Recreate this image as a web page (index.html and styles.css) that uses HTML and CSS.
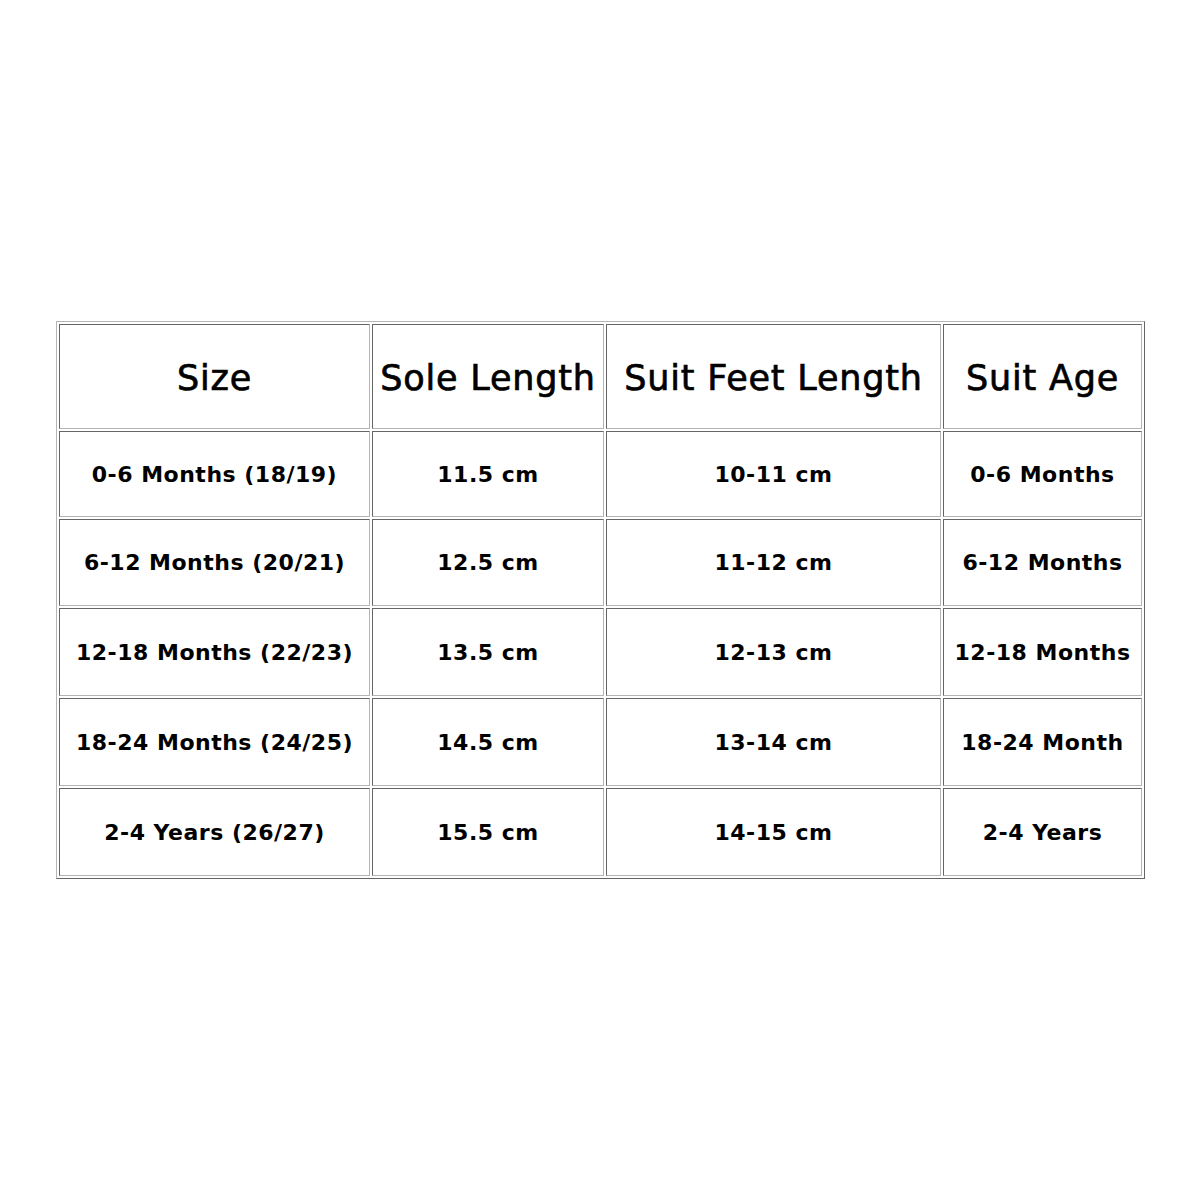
FILE: index.html
```html
<!DOCTYPE html>
<html>
<head>
<meta charset="utf-8">
<link rel="stylesheet" href="styles.css">
</head>
<body>
<div class="page">
<table class="size-chart">
  <thead>
    <tr class="head-row">
      <th class="c1">Size</th>
      <th class="c2">Sole Length</th>
      <th class="c3">Suit Feet Length</th>
      <th class="c4">Suit Age</th>
    </tr>
  </thead>
  <tbody>
    <tr class="r1"><td>0-6 Months (18/19)</td><td>11.5 cm</td><td>10-11 cm</td><td>0-6 Months</td></tr>
    <tr class="r2"><td>6-12 Months (20/21)</td><td>12.5 cm</td><td>11-12 cm</td><td>6-12 Months</td></tr>
    <tr class="r3"><td>12-18 Months (22/23)</td><td>13.5 cm</td><td>12-13 cm</td><td>12-18 Months</td></tr>
    <tr class="r4"><td>18-24 Months (24/25)</td><td>14.5 cm</td><td>13-14 cm</td><td>18-24 Month</td></tr>
    <tr class="r5"><td>2-4 Years (26/27)</td><td>15.5 cm</td><td>14-15 cm</td><td>2-4 Years</td></tr>
  </tbody>
</table>
</div>
</body>
</html>
```
FILE: styles.css
```css
html, body {
  margin: 0;
  padding: 0;
  background: #ffffff;
}
.page {
  width: 1200px;
  height: 1200px;
  box-sizing: border-box;
  padding-top: 321px;
  padding-left: 56px;
}
.size-chart {
  border-collapse: separate;
  border-spacing: 2px;
  border: 1px solid;
  border-color: #b4b4b4 #666666 #666666 #b4b4b4;
  table-layout: fixed;
  font-family: "DejaVu Sans", "Liberation Sans", sans-serif;
  color: #000;
}
.size-chart th,
.size-chart td {
  border: 1px solid;
  border-color: #666666 #b4b4b4 #b4b4b4 #666666;
  padding: 0;
  text-align: center;
  vertical-align: middle;
  box-sizing: border-box;
}
.size-chart th {
  font-size: 35px;
  font-weight: normal;
  height: 105px;
  letter-spacing: 0.8px;
  padding-top: 2px;
  -webkit-text-stroke: 0.7px #000;
}
.size-chart td {
  font-size: 22px;
  font-weight: bold;
  height: 87px;
  letter-spacing: 0.5px;
}
.c1 { width: 311px; }
.c2 { width: 232px; }
.c3 { width: 335px; }
.c4 { width: 199px; }
.r1 td { height: 86px; }
.r3 td, .r4 td, .r5 td { height: 88px; }
```
